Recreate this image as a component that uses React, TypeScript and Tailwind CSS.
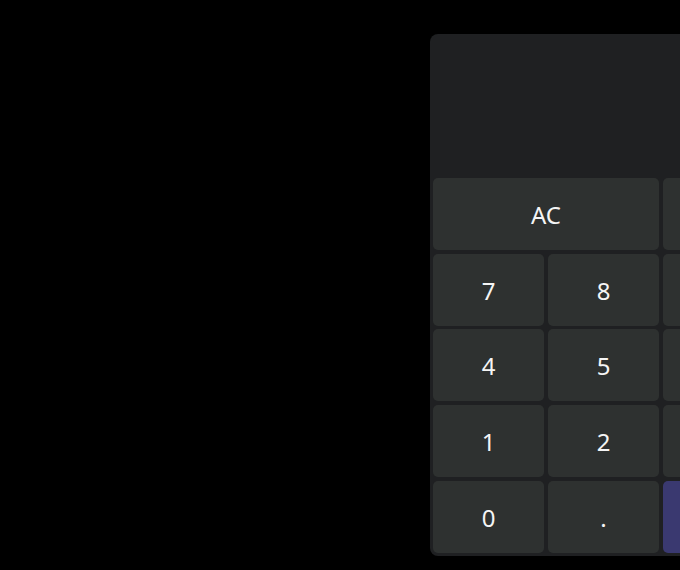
import React from "react";

type Key = { label: string; span?: number; accent?: boolean };

const keys: Key[] = [
  { label: "AC", span: 2 },
  { label: "⌫" },
  { label: "÷" },
  { label: "7" },
  { label: "8" },
  { label: "9" },
  { label: "×" },
  { label: "4" },
  { label: "5" },
  { label: "6" },
  { label: "−" },
  { label: "1" },
  { label: "2" },
  { label: "3" },
  { label: "+" },
  { label: "0" },
  { label: "." },
  { label: "=", span: 2, accent: true },
];

export default function App() {
  return (
    <div
      className="w-[680px] h-[570px] overflow-hidden bg-black"
      style={{ fontFamily: '"Noto Sans", "Open Sans", sans-serif' }}
    >
      <div className="pl-[430px] pt-[34px]">
        <div className="w-[462px] rounded-[8px] bg-[#1f2022] p-[3px] flex flex-col">
          <div className="h-[137.3px] flex items-end justify-end px-4 pb-3 text-[40px] text-[#f3f3f3]">
            0
          </div>
          <div className="mt-[4px] grid grid-cols-[repeat(4,111px)] auto-rows-[72px] gap-x-[4px] gap-y-[3.6px]">
            {keys.map((k) => (
              <button
                key={k.label}
                className={
                  (k.span === 2 ? "col-span-2 " : "") +
                  (k.accent ? "bg-[#3a3970] " : "bg-[#2e3130] ") +
                  "rounded-[5px] flex items-center justify-center pt-[2px] text-[24px] leading-none text-[#f5f5f5]"
                }
              >
                {k.label}
              </button>
            ))}
          </div>
        </div>
      </div>
    </div>
  );
}
